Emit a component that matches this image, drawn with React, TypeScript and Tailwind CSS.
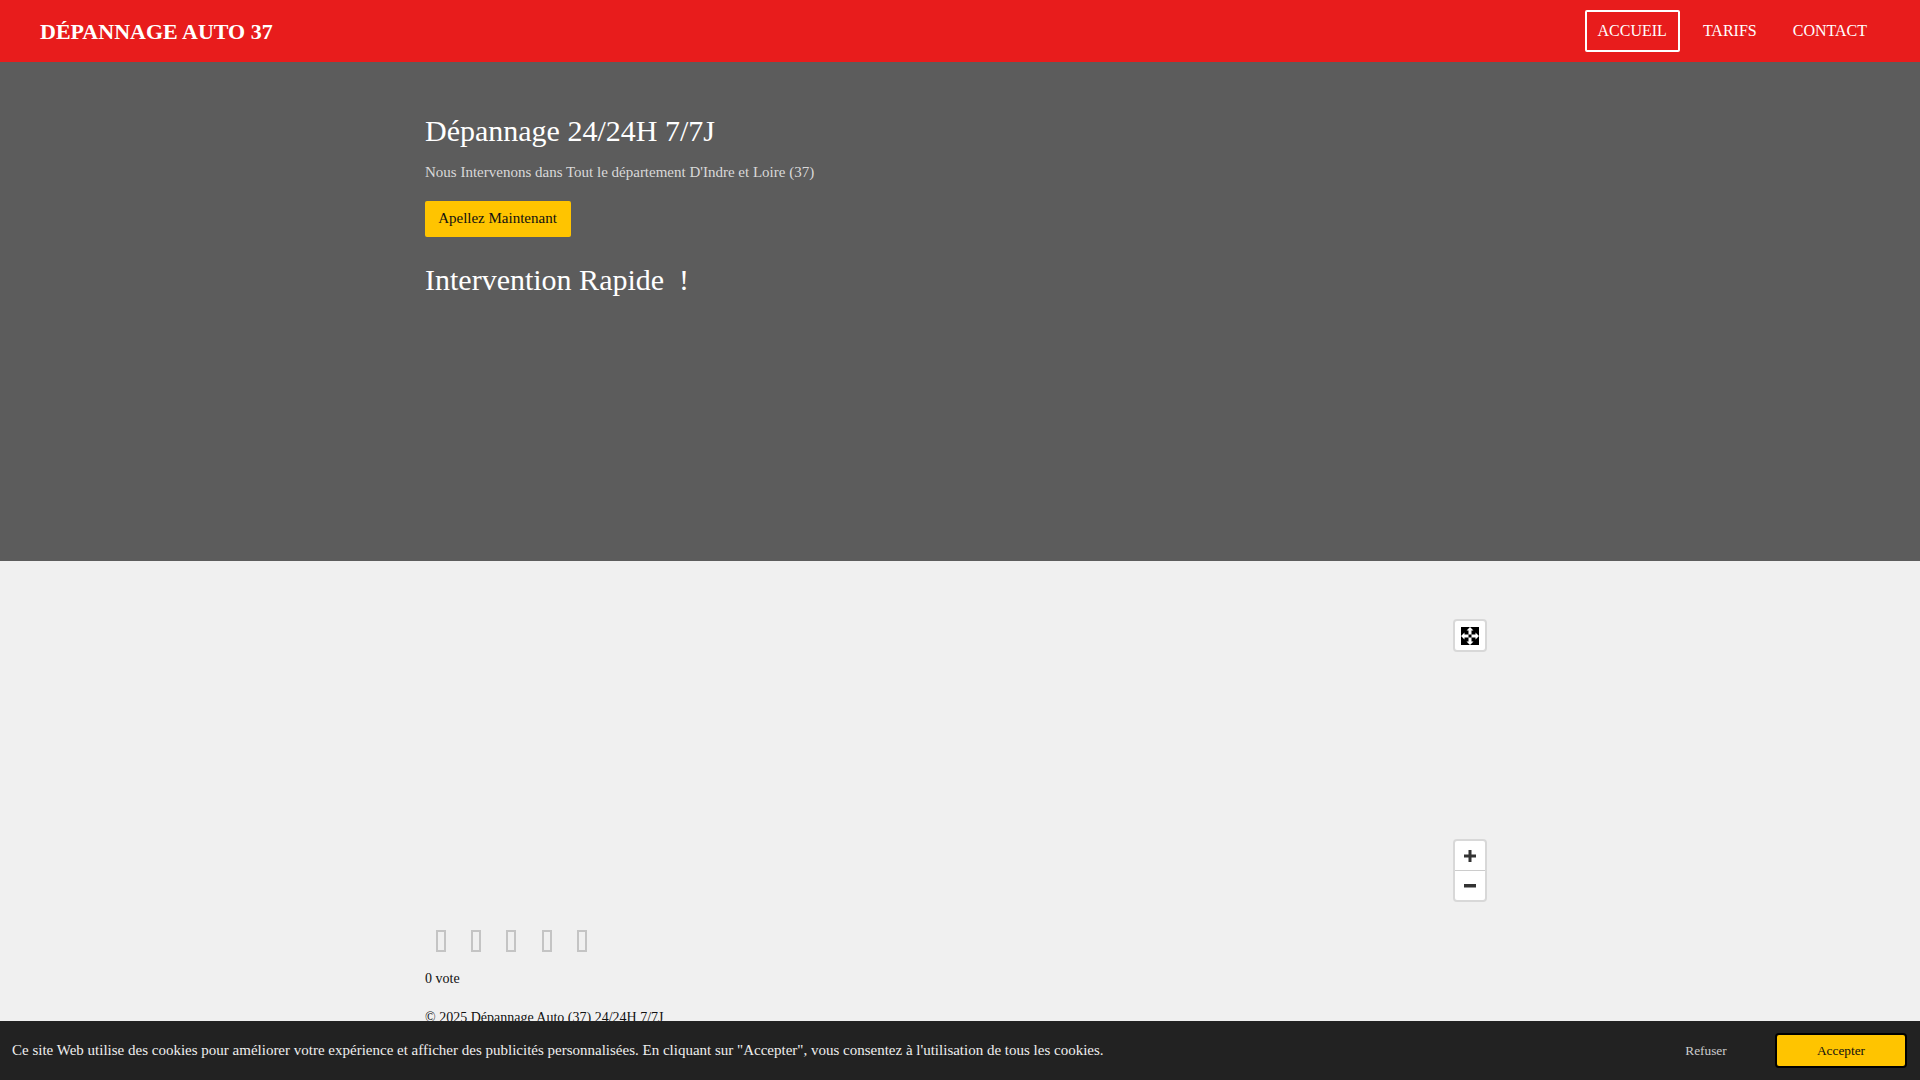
export default function App() {
  return (
    <div className="h-screen overflow-hidden bg-[#f0f0f0] font-['Liberation_Serif',serif] text-[#111] relative flex flex-col">
      <header className="h-[62px] shrink-0 bg-[#e81c1c] flex items-center justify-between pl-10 pr-[41px] text-white">
        <span className="text-[22px] font-bold">DÉPANNAGE AUTO 37</span>
        <nav className="flex items-center text-[16px]">
          <a className="border-2 border-white rounded-[2px] px-[11px] h-[42px] flex items-center">ACCUEIL</a>
          <a className="ml-[11px] px-[12px] h-[42px] flex items-center">TARIFS</a>
          <a className="ml-[12px] px-[12px] h-[42px] flex items-center">CONTACT</a>
        </nav>
      </header>
      <section className="h-[499px] shrink-0 bg-[#5c5c5c] pl-[425px] pt-[50px]">
        <h1 className="text-[30px] leading-[38px] text-white">Dépannage 24/24H 7/7J</h1>
        <p className="mt-[11px] text-[15px] leading-[22px] text-[#d9d9d9]">Nous Intervenons dans Tout le département D'Indre et Loire (37)</p>
        <button className="mt-[18px] block h-[36px] w-[146px] bg-[#ffc400] rounded-[2px] text-[15px] leading-[34px] pb-[2px] pr-[1px] text-[#111]">Apellez Maintenant</button>
        <h2 className="mt-[24px] text-[30px] leading-[38px] text-white">Intervention Rapide&nbsp; !</h2>
      </section>
      <main className="pl-[425px] w-[1487px] flex flex-col">
        <div className="relative h-[350px]">
          <button className="absolute right-0 top-[58px] w-[34px] h-[33px] bg-white rounded-[4px] border-2 border-[#d8d8d8] flex items-center justify-center">
            <svg width="18" height="18" viewBox="0 0 18 18">
              <rect width="18" height="18" fill="#000" />
              <path d="M9 0l3.500 3.500h-2v4h-3v-4h-2zM9 18l-3.500-3.500h2v-4h3v4h2zM0 9l3.500-3.500v2h4v3h-4v2zM18 9l-3.500 3.500v-2h-4v-3h4v-2z" fill="#fff" />
            </svg>
          </button>
          <div className="absolute right-0 top-[278px] w-[34px] h-[63px] bg-white rounded-[4px] border-2 border-[#d8d8d8] flex flex-col">
            <div className="flex-1 flex items-center justify-center border-b border-[#ccc]">
              <svg width="12" height="12" viewBox="0 0 12 12"><path d="M4.500 0h3v4.500h4.500v3h-4.500v4.500h-3v-4.500h-4.500v-3h4.500z" fill="#333" /></svg>
            </div>
            <div className="flex-1 flex items-center justify-center">
              <svg width="12" height="4" viewBox="0 0 12 4"><rect width="12" height="3.500" fill="#333" /></svg>
            </div>
          </div>
        </div>
        <div className="flex mt-[19px] pl-[11px] gap-[25.200px]">
          {[0, 1, 2, 3, 4].map((i) => (
            <span key={i} className="w-[10px] h-[22px] border-2 border-[#c4c4c4]" />
          ))}
        </div>
        <p className="text-[14px] leading-[20px] mt-[17px]">0 vote</p>
        <p className="text-[14px] leading-[20px] mt-[19px]">© 2025 Dépannage Auto (37) 24/24H 7/7J</p>
      </main>
      <div className="fixed left-0 right-0 bottom-0 h-[59px] bg-[#222] flex items-center justify-between pl-3 pr-[13px] text-[15px] text-[#eee]">
        <span>Ce site Web utilise des cookies pour améliorer votre expérience et afficher des publicités personnalisées. En cliquant sur "Accepter", vous consentez à l'utilisation de tous les cookies.</span>
        <div className="flex items-center gap-[43px]">
          <button className="text-[13.333px] text-[#ccc] w-[52px]">Refuser</button>
          <button className="w-[132px] h-[35px] bg-[#ffc400] border-2 border-black rounded-[4px] text-[13.333px] text-[#111]">Accepter</button>
        </div>
      </div>
    </div>
  );
}
